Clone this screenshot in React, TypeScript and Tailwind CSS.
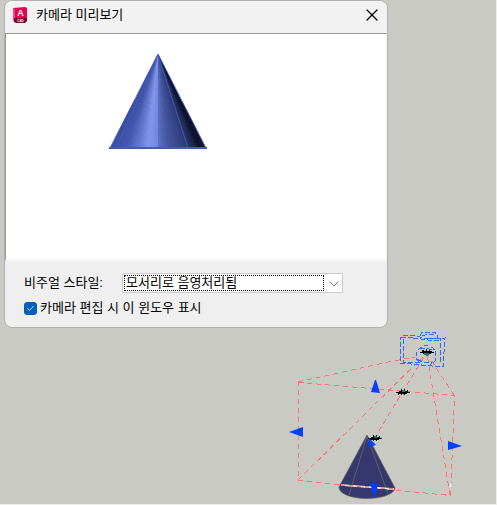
import { Check, ChevronDown, X } from "lucide-react";
import { useState } from "react";

const styles = ["모서리로 음영처리됨", "2D 와이어프레임", "개념", "실제"];

// Shade of the cone along its base: [x, r, g, b]
const shades = [
  [2, 58, 76, 160],
  [18, 68, 88, 176],
  [30, 98, 120, 205],
  [40, 130, 151, 235],
  [49, 114, 136, 222],
  [50, 92, 112, 190],
  [62, 66, 84, 156],
  [76, 50, 64, 128],
  [86, 30, 40, 86],
  [92, 12, 17, 38],
  [98, 16, 22, 52],
];

function shadeAt(x: number) {
  const i = Math.max(1, shades.findIndex((s) => s[0] >= x));
  const a = shades[i - 1];
  const b = shades[i];
  const t = (x - a[0]) / (b[0] - a[0]);
  const [r, g, bl] = [1, 2, 3].map((k) => Math.round(a[k] + (b[k] - a[k]) * t));
  return `rgb(${r}, ${g}, ${bl})`;
}

function AppIcon() {
  return (
    <svg viewBox="0 0 15 17" className="h-[17px] w-[15px]" aria-hidden="true">
      <path d="M0 1 L12 0 L14 1 V12 H0Z" fill="#e5004f" />
      <path d="M0 1 L2 2 V13 L1 15 L0 13Z" fill="#f04a7c" />
      <path d="M1 11 H14 V14 L12 16 H3 L1 15Z" fill="#86042f" />
      <text x="7.5" y="9" textAnchor="middle" fontSize="9" fontWeight="700" fill="#fff">
        A
      </text>
      <text x="7.5" y="15" textAnchor="middle" fontSize="3" fontWeight="700" fill="#fff">
        CAD
      </text>
    </svg>
  );
}

function PreviewCone() {
  const facets = Array.from({ length: 48 }, (_, i) => 2 + i * 2);

  return (
    <svg viewBox="0 0 100 98" className="ml-[102px] mt-[19px] h-[98px] w-[100px]">
      {/* Each facet runs on to the right edge and the next one covers it */}
      {facets.map((x) => (
        <path
          key={x}
          d={`M50 1 L${x} 96 H98Z`}
          fill={shadeAt(x + 1)}
          shapeRendering="crispEdges"
        />
      ))}
      <g fill="none" stroke="#4459b8">
        <path d="M50 2 L8 95 M50 2 L80 95" />
        <path d="M50 1 L2 95 H98Z" />
        <path d="M1 95 H99" strokeWidth="2" />
      </g>
    </svg>
  );
}

function Target({ x, y }: { x: number; y: number }) {
  return (
    <g transform={`translate(${x} ${y})`}>
      <path
        d="M-7 0 H-4 V-1 H-2 V-3 H-1 V-1 H1 V-3 H2 V-1 H4 V-2 H5 V0 H7 V1 H4 V2 H2 V3 H1 V2 H-1 V3 H-2 V2 H-4 V3 H-5 V1 H-7Z"
        fill="#000"
      />
      <path d="M-1 -2 H2 V0 H-1Z" fill="#087f85" />
    </g>
  );
}

function Scene() {
  return (
    <svg viewBox="280 328 216 176" className="ml-auto block h-[176px] w-[216px]">
      {/* Cone model */}
      <path d="M367 435 L339 487 A28 11 0 0 0 395 488Z" fill="#37376f" />
      <g fill="none" stroke="#606060">
        <path d="M367 435 L339 487 A28 11 0 0 0 395 488 L367 435" strokeOpacity="0.7" />
        <path d="M367 436 L349 495 M367 436 L388 494" />
      </g>

      {/* View frustum */}
      <g fill="none" stroke="#ff7272" strokeDasharray="5 4" shapeRendering="crispEdges">
        <path d="M298.5 382.5 L454.5 395.5 L450.5 495.5 L298.5 480.5Z" />
        <path d="M298 382 L388 362 L415 357" />
        <path d="M298 480 L426 354" />
        <path d="M454 395 L427 354" />
        <path d="M450 495 L427 354" />
        <path d="M374 439 L402 393 L426 354" />
      </g>
      <path d="M341 485 L394 489" stroke="#fff" strokeWidth="1.5" />
      <path d="M341 485 L394 489" stroke="#ff7272" strokeWidth="1.5" strokeDasharray="4 4" />
      <path d="M450.5 483 V487" stroke="#fff" />

      {/* Camera glyph */}
      <g fill="none" stroke="#3568ff" strokeDasharray="5 2" shapeRendering="crispEdges">
        <path d="M401 337 L413 337 M428 339 L445 338 L443 367 L400 363 L401 337" />
        <path d="M403 339 L403 362 L420 363 M403 335 L413 335 L423 338 L441 339 L440 363" />
        <path d="M413 338 L428 340 L440 341" />
        <path d="M420 336 L422 332 L434 332 L437 334 V338" />
        <path d="M422 336 L428 334 L434 335" />
        <path d="M419 362 L416 358 L416 353 L420 348 L426 345 L433 348 L436 352 L435 361 L430 365" />
        <path d="M420 349 L426 348 L432 350 M418 359 L423 363 L432 362" />
      </g>
      <path
        d="M420 352 H422 V350 H424 V351 H426 V349 H427 V351 H429 V350 H430 V351 H432 V352 H434 V353 H431 V354 H429 V353 H425 V354 H423 V353 H420Z"
        fill="#000"
      />
      <path d="M424 353 H429 V355 H428 V356 H426 V355 H424Z" fill="#087f85" />
      <Target x={403} y={392} />
      <Target x={375} y={438} />

      {/* Grips */}
      <g fill="#0040ff">
        <path d="M375 380 H376 L380 393 L371 392Z" />
        <path d="M289 432 L303 427 V437Z" />
        <path d="M448 441 V450 L462 446Z" />
        <path d="M370 483 L378 484 L375 497 H374Z" />
        <path d="M369 438 L376 445 L369 447Z" />
      </g>
    </svg>
  );
}

export default function App() {
  const [style, setStyle] = useState(styles[0]);
  const [show, setShow] = useState(true);

  return (
    <main className="min-h-screen border-b border-r border-[#ededeb] bg-[#c9cac4] pl-1 font-['Liberation_Sans','Noto_Sans_CJK_KR',sans-serif] text-[13px] leading-4 text-black">
      <section
        role="dialog"
        aria-labelledby="title"
        className="w-4/5 max-w-[384px] overflow-hidden rounded-lg border border-[#b0b0b0] bg-[#efefef]"
      >
        <header className="flex h-8 items-center bg-[#f2f2f2] pb-1 pl-2 pr-[5px]">
          <AppIcon />
          <h1 id="title" className="ml-2">카메라 미리보기</h1>
          <button type="button" aria-label="닫기" className="ml-auto">
            <X className="size-5" strokeWidth={1.5} />
          </button>
        </header>

        <div className="h-[228px] border border-b-2 border-[#f8f8f8] border-t-[#999999] border-l-[#999999] bg-white">
          <PreviewCone />
        </div>

        <div className="px-[19px] pb-[11px] pt-3">
          <div className="flex items-center">
            <label htmlFor="style" className="w-[98px]">비주얼 스타일:</label>
            <div className="relative w-[221px]">
              <select
                id="style"
                value={style}
                onChange={(e) => setStyle(e.target.value)}
                className="block h-5 w-full appearance-none border border-[#cccccc] bg-white pl-[3px] leading-4 outline-none"
              >
                {styles.map((s) => (
                  <option key={s}>{s}</option>
                ))}
              </select>
              <span className="pointer-events-none absolute inset-y-[2px] left-[2px] right-[19px] border border-dotted border-black" />
              <ChevronDown
                className="pointer-events-none absolute right-px top-[3px] size-4 text-[#777777]"
                strokeWidth={1.5}
              />
            </div>
          </div>

          <label className="mt-[7px] flex items-center">
            <span className="relative mr-[3px] size-[13px]">
              <input
                type="checkbox"
                checked={show}
                onChange={(e) => setShow(e.target.checked)}
                className="block size-[13px] appearance-none rounded-[3px] border border-[#005fb8] bg-white checked:bg-[#005fb8]"
              />
              {show && (
                <Check className="pointer-events-none absolute left-[2px] top-[2px] size-[9px] text-white" strokeWidth={2} />
              )}
            </span>
            카메라 편집 시 이 윈도우 표시
          </label>
        </div>
      </section>

      <Scene />
    </main>
  );
}
